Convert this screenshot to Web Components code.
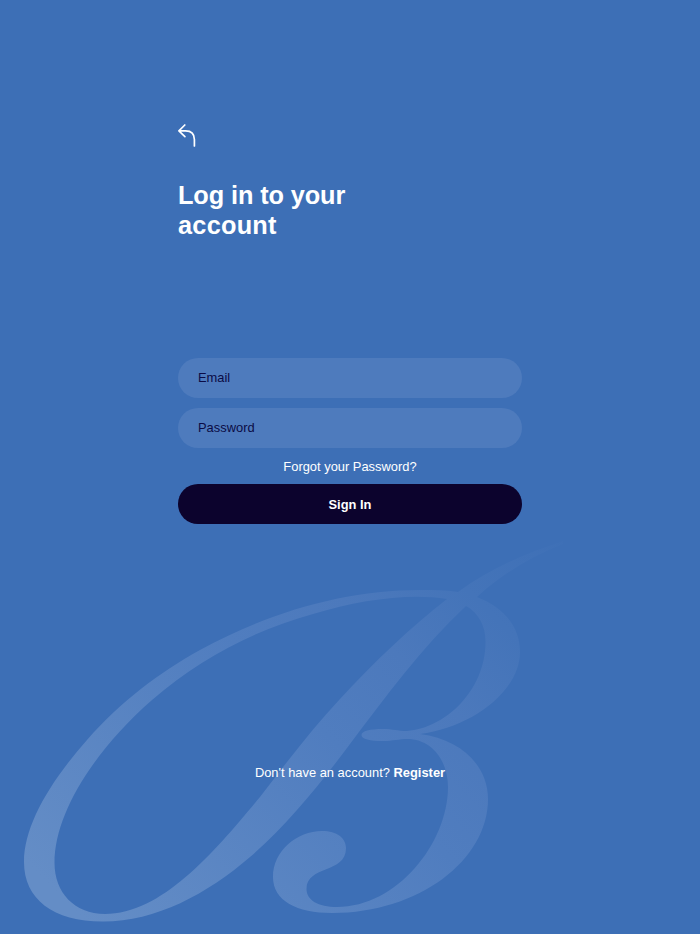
<!DOCTYPE html>
<html lang="en">
<head>
<meta charset="utf-8">
<title>Log in</title>
<style>
  html, body {
    margin: 0;
    height: 100%;
    background: #3d6fb6;
  }
  .wide {
    letter-spacing: 0.25px;
  }
</style>
</head>
<body>
<login-screen>
  <back-button slot="nav"></back-button>
  <span slot="title">Log in to your <span class="wide">account</span></span>
  <pill-field slot="field" type="email" label="Email"></pill-field>
  <pill-field slot="field" type="password" label="Password"></pill-field>
  <text-link slot="forgot">Forgot your Password?</text-link>
  <pill-button slot="action">Sign In</pill-button>
  <span slot="footer">Don't have an account? <text-link strong>Register</text-link></span>
</login-screen>

<script>
const define = (name, html) => {
  const template = document.createElement("template");
  template.innerHTML = html;
  customElements.define(name, class extends HTMLElement {
    constructor() {
      super();
      this.attachShadow({ mode: "open" }).append(template.content.cloneNode(true));
    }

    connectedCallback() {
      const input = this.shadowRoot.querySelector("input");
      if (input) {
        input.type = this.getAttribute("type") || "text";
        input.placeholder = this.getAttribute("label");
        input.setAttribute("aria-label", this.getAttribute("label"));
      }
    }
  });
};

define("brand-flourish", `
  <style>
    :host {
      display: block;
      pointer-events: none;
    }
    svg {
      display: block;
    }
  </style>
  <svg width="700" height="414" viewBox="0 520 700 414" aria-hidden="true">
    <defs>
      <linearGradient id="fade" gradientUnits="userSpaceOnUse" x1="80" y1="915" x2="525" y2="470">
        <stop offset="0" stop-color="#648dc6"/>
        <stop offset="0.48" stop-color="#507dbf"/>
        <stop offset="0.65" stop-color="#4c79bc"/>
        <stop offset="0.8" stop-color="#4474b9"/>
        <stop offset="1" stop-color="#3d6fb6"/>
      </linearGradient>
    </defs>
    <path fill="url(#fade)" fill-rule="evenodd" d="
      M563 541 C524 554 489 569 458 592 C446 590 434 590 420 590
      C346 590 269 612 200 650 C159 673 121 701 87 740
      C49 783 24 826 24 862 C24 899 53 921.5 103 921.5
      C156 921.5 207 894 250 857 C285 827 317 788 347 748
      C387 695 422 647 466 606 C479 613 486 627 485.5 643
      C485 690 446 728 407 731 C397 731 393 729 383 729
      C370 729 361.5 731 361.5 735 C361.5 739 370 741 383 741
      C393 741 399 739 407 739 C433 739 448 762 448 787
      C448 843 397 907 337 907 C318 907 306.5 900 306.5 889
      C306.5 865 346 874 346 848 C346 838 337 831 322 831
      C297 831 273 851 273 877 C273 901 297 913 332 913
      C419 913 488 860 488 799 C488 765 460 739 420 734
      C470 728 520 692 520 652 C520 626 503 607 477 597
      C501 575 530 557 563 544 Z
      M447 599 C410 628 375 661 340 699 C312 729 286 763 260 797
      C216 850 163 914 105 914 C74 914 54.5 892 54.5 863
      C54.5 813 94 751 152 700 C198 660 254 630 313 614
      C360 600 408 593 447 599 Z"/>
  </svg>
`);

define("back-button", `
  <style>
    :host {
      display: block;
      width: 19px;
      height: 24px;
    }
    button {
      display: block;
      padding: 0;
      border: 0;
      background: none;
      color: inherit;
      cursor: pointer;
    }
    svg {
      display: block;
    }
  </style>
  <button aria-label="Back">
    <svg width="19" height="24" viewBox="0 0 19 24" fill="none" stroke="currentColor" stroke-width="1.7" stroke-linecap="round" stroke-linejoin="round">
      <path d="M6.8 1 .9 6.8l6 5.8M1 6.8h6.6c5.6 0 8.8 3.2 8.8 8.8v6.4"/>
    </svg>
  </button>
`);

define("pill-field", `
  <style>
    :host {
      display: block;
      height: 40px;
    }
    input {
      display: block;
      box-sizing: border-box;
      width: 100%;
      height: 100%;
      padding: 0 20px;
      border: 0;
      border-radius: 20px;
      outline: none;
      background: #4e7bbd;
      color: #0b032d;
      font: inherit;
    }
    input::placeholder {
      color: #0b0b45;
      opacity: 1;
    }
  </style>
  <input>
`);

define("pill-button", `
  <style>
    :host {
      display: block;
      height: 40px;
    }
    button {
      display: block;
      box-sizing: border-box;
      width: 100%;
      height: 100%;
      padding: 1px 0 0;
      border: 0;
      border-radius: 20px;
      background: #0c032d;
      color: #fff;
      font: inherit;
      font-weight: 700;
      cursor: pointer;
    }
  </style>
  <button><slot></slot></button>
`);

define("text-link", `
  <style>
    :host {
      display: inline;
    }
    a {
      color: inherit;
      text-decoration: none;
      cursor: pointer;
    }
    :host([strong]) a {
      font-weight: 700;
    }
  </style>
  <a><slot></slot></a>
`);

define("login-screen", `
  <style>
    :host {
      position: relative;
      display: flex;
      flex-direction: column;
      align-items: center;
      box-sizing: border-box;
      height: 934px;
      padding-top: 124px;
      overflow: hidden;
      background: #3d6fb6;
      color: #fff;
      font: 12.9px/20px "Liberation Sans", Arial, sans-serif;
    }
    brand-flourish {
      position: absolute;
      left: 0;
      bottom: 0;
    }
    main {
      position: relative;
      display: flex;
      flex-direction: column;
      width: 344px;
    }
    h1 {
      width: 200px;
      margin: 31.5px 0 0;
      font-size: 25.3px;
      line-height: 30px;
      letter-spacing: -0.1px;
    }
    form {
      display: flex;
      flex-direction: column;
      gap: 10px;
      margin-top: 118px;
    }
    .forgot {
      margin: -1px 0 -2.5px;
      text-align: center;
    }
    footer {
      margin-top: 238.5px;
      text-align: center;
    }
  </style>
  <brand-flourish></brand-flourish>
  <main>
    <slot name="nav"></slot>
    <h1><slot name="title"></slot></h1>
    <form>
      <slot name="field"></slot>
      <div class="forgot"><slot name="forgot"></slot></div>
      <slot name="action"></slot>
    </form>
    <footer><slot name="footer"></slot></footer>
  </main>
`);
</script>
</body>
</html>
